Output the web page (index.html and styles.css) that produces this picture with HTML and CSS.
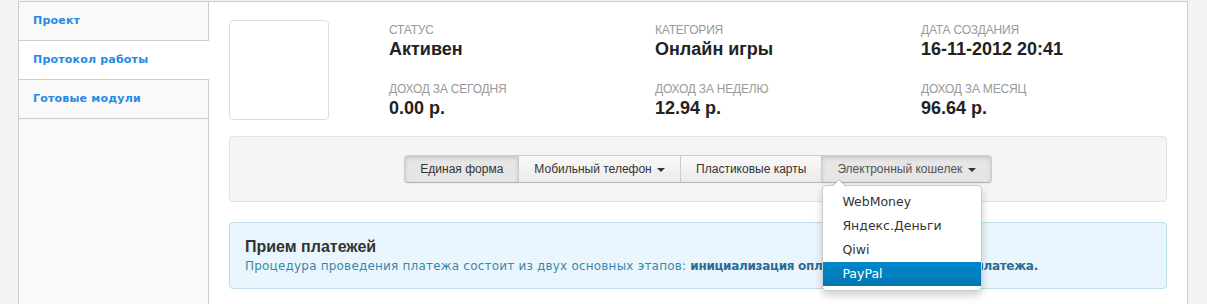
FILE: index.html
```html
<!DOCTYPE html>
<html lang="ru">
<head>
  <meta charset="UTF-8" />
  <title>Протокол работы</title>
  <link rel="stylesheet" href="styles.css">
</head>
<body>

<div class="page">
  <aside class="sidebar">
    <a class="nav-item" href="#">Проект</a>
    <a class="nav-item active" href="#">Протокол работы</a>
    <a class="nav-item" href="#">Готовые модули</a>
  </aside>

  <main class="content">
    <div class="project-head">
      <div class="project-logo"></div>
      <div class="stats">
        <div class="stat">
          <div class="stat-label">Статус</div>
          <div class="stat-value">Активен</div>
        </div>
        <div class="stat">
          <div class="stat-label">Категория</div>
          <div class="stat-value">Онлайн игры</div>
        </div>
        <div class="stat">
          <div class="stat-label">Дата создания</div>
          <div class="stat-value">16-11-2012 20:41</div>
        </div>
        <div class="stat">
          <div class="stat-label">Доход за сегодня</div>
          <div class="stat-value">0.00 р.</div>
        </div>
        <div class="stat">
          <div class="stat-label">Доход за неделю</div>
          <div class="stat-value">12.94 р.</div>
        </div>
        <div class="stat">
          <div class="stat-label">Доход за месяц</div>
          <div class="stat-value">96.64 р.</div>
        </div>
      </div>
    </div>

    <div class="well">
      <div class="btn-group">
        <button class="btn active">Единая форма</button>
        <button class="btn">Мобильный телефон <span class="caret"></span></button>
        <button class="btn">Пластиковые карты</button>
        <div class="dropdown">
          <button class="btn active">Электронный кошелек <span class="caret"></span></button>
          <ul class="dropdown-menu">
            <li><a href="#">WebMoney</a></li>
            <li><a href="#">Яндекс.Деньги</a></li>
            <li><a href="#">Qiwi</a></li>
            <li><a class="selected" href="#">PayPal</a></li>
          </ul>
        </div>
      </div>
    </div>

    <div class="alert">
      <h4>Прием платежей</h4>
      <p>Процедура проведения платежа состоит из двух основных этапов: <b>инициализация оплаты и подтверждение платежа.</b></p>
    </div>
  </main>
</div>

</body>
</html>
```

FILE: styles.css
```css
body {
  margin: 0;
  background: #f3f3f3;
  font-family: "Liberation Sans", Arial, sans-serif;
  color: #333;
}

.page {
  display: flex;
  width: 1170px;
  min-height: 420px;
  margin: 1px 0 0 18px;
  box-sizing: border-box;
  background: white;
  border: 1px solid #ccc;
  border-bottom: none;
}

/* left menu */
.sidebar {
  width: 190px;
  flex-shrink: 0;
  box-sizing: border-box;
  background: #f9f9f9;
  border-right: 1px solid #ccc;
}

.nav-item {
  display: block;
  height: 38px;
  line-height: 38px;
  padding-left: 14px;
  border-bottom: 1px solid #ccc;
  font-family: "DejaVu Sans", Verdana, sans-serif;
  font-size: 11px;
  font-weight: bold;
  letter-spacing: 0.2px;
  color: #258ae6;
  text-decoration: none;
}

.nav-item.active {
  background: white;
  margin-right: -1px;
}

/* main area */
.content {
  flex: 1;
  min-width: 0;
  padding: 18px 20px 20px 20px;
}

.project-head {
  display: flex;
  margin-bottom: 16px;
}

.project-logo {
  width: 100px;
  height: 100px;
  flex-shrink: 0;
  box-sizing: border-box;
  border: 1px solid #ddd;
  border-radius: 4px;
  margin-right: 60px;
}

.stats {
  flex: 1;
  display: grid;
  grid-template-columns: 266px 266px 1fr;
  row-gap: 20px;
  margin-top: 2px;
}

.stat-label {
  font-family: "Liberation Sans", Arial, sans-serif;
  font-size: 12px;
  line-height: 16px;
  letter-spacing: -0.2px;
  text-transform: uppercase;
  color: #999;
}

.stat-value {
  font-size: 18px;
  line-height: 22px;
  font-weight: bold;
  color: #222;
}

.well {
  display: flex;
  justify-content: center;
  padding: 18px;
  background: #f5f5f5;
  border: 1px solid #e3e3e3;
  border-radius: 4px;
  margin-bottom: 20px;
}

.btn-group {
  display: flex;
}

.btn {
  height: 28px;
  padding: 4px 15px;
  font-family: "Liberation Sans", Arial, sans-serif;
  font-size: 12px;
  line-height: 18px;
  color: #333;
  background: linear-gradient(#f9f9f9, #ebebeb);
  border: 1px solid #ccc;
  border-bottom-color: #b3b3b3;
  margin-left: -1px;
  white-space: nowrap;
}

.btn-group > .btn:first-child {
  margin-left: 0;
  border-radius: 4px 0 0 4px;
}

.dropdown {
  position: relative;
  margin-left: -1px;
}

.dropdown .btn {
  margin-left: 0;
  border-radius: 0 4px 4px 0;
  color: #555;
}

.btn.active {
  background: #e6e6e6;
  box-shadow: inset 0 2px 4px rgba(0, 0, 0, 0.15), 0 1px 2px rgba(0, 0, 0, 0.05);
}

.caret {
  display: inline-block;
  vertical-align: middle;
  margin-left: 2px;
  border-top: 4px solid #333;
  border-left: 4px solid transparent;
  border-right: 4px solid transparent;
}

.dropdown-menu {
  position: absolute;
  top: 30px;
  left: 1px;
  z-index: 10;
  width: 160px;
  box-sizing: border-box;
  margin: 0;
  padding: 4px 0;
  list-style: none;
  background: white;
  border: 1px solid rgba(0, 0, 0, 0.2);
  border-radius: 5px;
  box-shadow: 0 4px 8px rgba(0, 0, 0, 0.2);
}

.dropdown-menu::before,
.dropdown-menu::after {
  content: "";
  position: absolute;
  border-left: 7px solid transparent;
  border-right: 7px solid transparent;
}

.dropdown-menu::before {
  top: -7px;
  left: 9px;
  border-bottom: 7px solid rgba(0, 0, 0, 0.2);
}

.dropdown-menu::after {
  top: -6px;
  left: 10px;
  border-left-width: 6px;
  border-right-width: 6px;
  border-bottom: 6px solid white;
}

.dropdown-menu a {
  display: block;
  padding: 0 19px;
  line-height: 24px;
  font-family: "DejaVu Sans", Verdana, sans-serif;
  font-size: 12.5px;
  color: #333;
  text-decoration: none;
}

.dropdown-menu a.selected {
  color: white;
  background: linear-gradient(#0088cc, #0077b3);
}

.alert {
  padding: 14px 15px 13px;
  background: #eaf6fd;
  border: 1px solid #bcdfe9;
  border-radius: 4px;
}

.alert h4 {
  margin: 0;
  font-size: 16px;
  line-height: 20px;
  color: #333;
}

.alert p {
  margin: 0;
  font-family: "DejaVu Sans", Verdana, sans-serif;
  font-size: 12px;
  line-height: 18px;
  letter-spacing: 0.2px;
  color: #3a87ad;
}

.alert b {
  letter-spacing: -0.3px;
  color: #2d6a94;
}
```
